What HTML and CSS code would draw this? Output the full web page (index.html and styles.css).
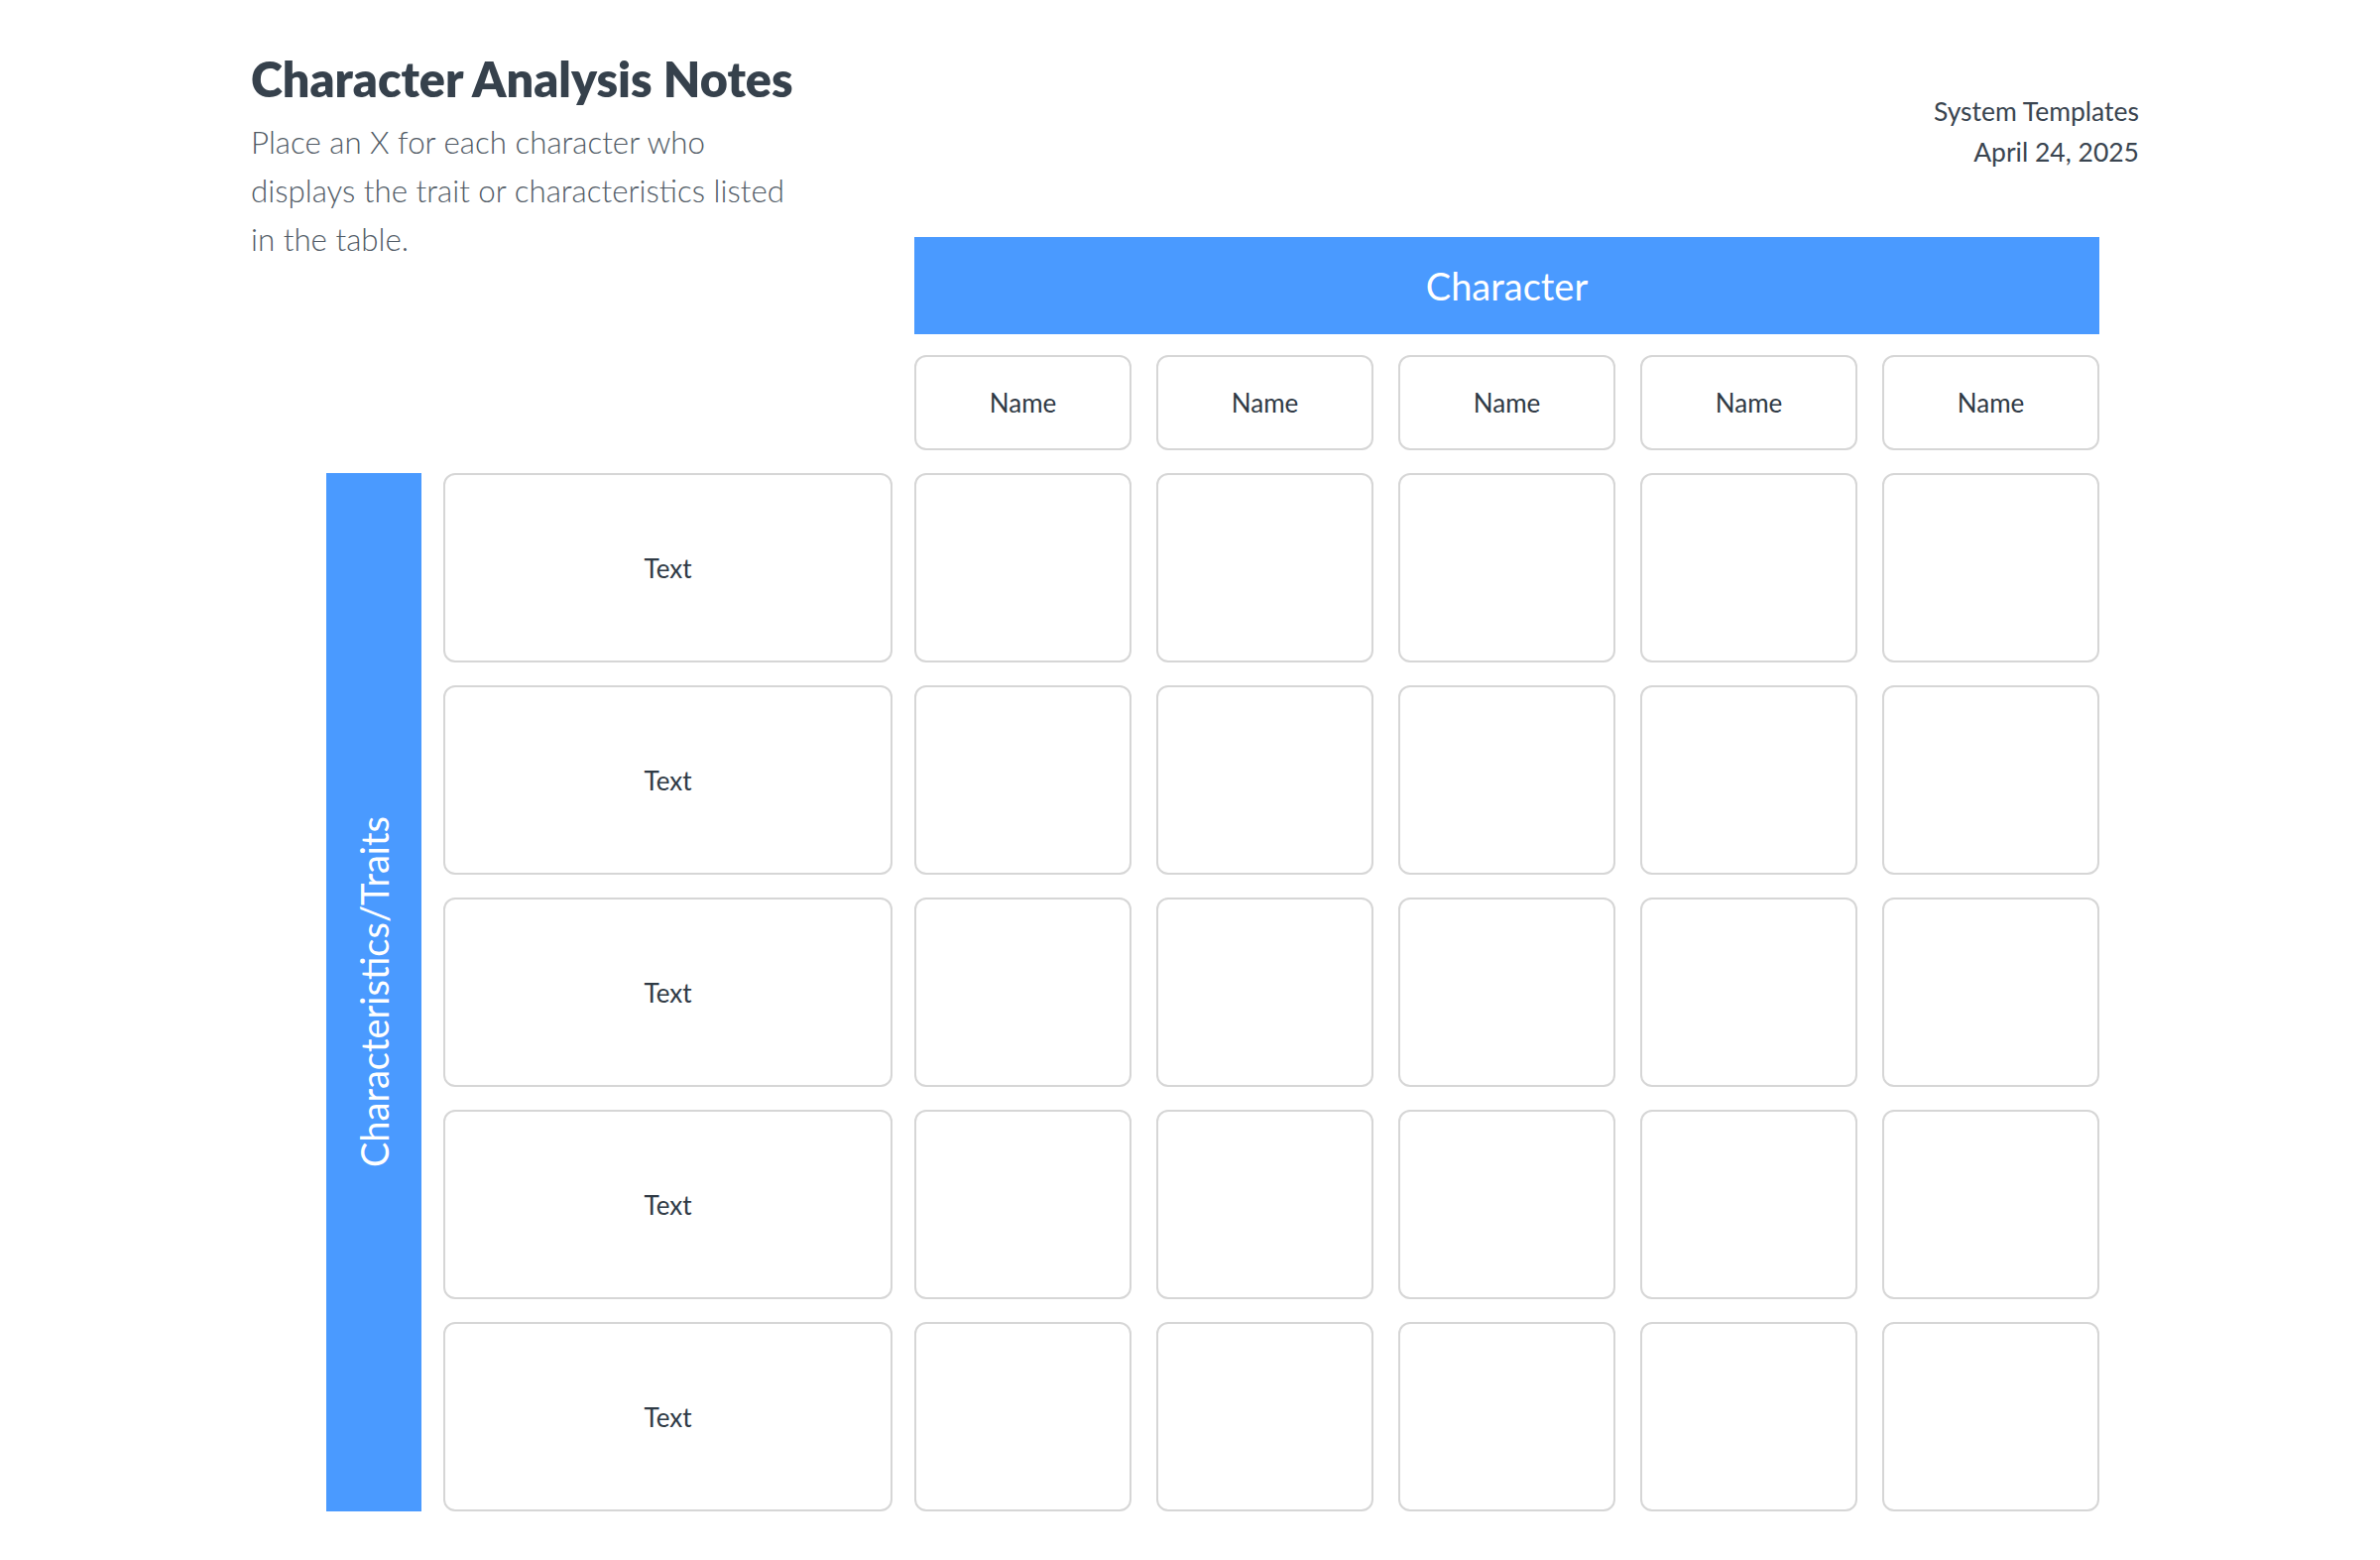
FILE: index.html
```html
<!DOCTYPE html>
<html lang="en">
<head>
<meta charset="utf-8">
<title>Character Analysis Notes</title>
<link rel="stylesheet" href="styles.css">
</head>
<body>
<main class="page">
  <div class="layout">
    <div class="intro">
      <h1 class="title">Character Analysis Notes</h1>
      <p class="desc">Place an X for each character who displays the trait or characteristics listed in the table.</p>
    </div>
    <div class="meta">
      <div>System Templates</div>
      <div>April 24, 2025</div>
    </div>
    <div class="char-bar">Character</div>
    <div class="names five">
      <div class="cell name">Name</div>
      <div class="cell name">Name</div>
      <div class="cell name">Name</div>
      <div class="cell name">Name</div>
      <div class="cell name">Name</div>
    </div>
    <div class="matrix">
      <div class="side-bar"><span class="side-label">Characteristics/Traits</span></div>
      <div class="rows">
        <div class="row">
          <div class="cell trait">Text</div>
          <div class="five"><div class="cell"></div><div class="cell"></div><div class="cell"></div><div class="cell"></div><div class="cell"></div></div>
        </div>
        <div class="row">
          <div class="cell trait">Text</div>
          <div class="five"><div class="cell"></div><div class="cell"></div><div class="cell"></div><div class="cell"></div><div class="cell"></div></div>
        </div>
        <div class="row">
          <div class="cell trait">Text</div>
          <div class="five"><div class="cell"></div><div class="cell"></div><div class="cell"></div><div class="cell"></div><div class="cell"></div></div>
        </div>
        <div class="row">
          <div class="cell trait">Text</div>
          <div class="five"><div class="cell"></div><div class="cell"></div><div class="cell"></div><div class="cell"></div><div class="cell"></div></div>
        </div>
        <div class="row">
          <div class="cell trait">Text</div>
          <div class="five"><div class="cell"></div><div class="cell"></div><div class="cell"></div><div class="cell"></div><div class="cell"></div></div>
        </div>
      </div>
    </div>
  </div>
</main>
</body>
</html>
```

FILE: styles.css
```css
* { box-sizing: border-box; }
html, body { margin: 0; padding: 0; background: #ffffff; }
body {
  font-family: Lato, "Noto Sans", "Liberation Sans", sans-serif;
  color: #2f3a45;
}
.page {
  padding: 50px 0 0 253px;
}
.layout {
  display: grid;
  grid-template-columns: 669px 1195px 40px;
  grid-template-rows: 189px 98px auto auto;
}
.intro {
  grid-column: 1;
  grid-row: 1 / span 2;
}
.title {
  margin: 0;
  font-size: 48.5px;
  line-height: 58px;
  font-weight: 800;
  color: #36414c;
}
.desc {
  margin: 11px 0 0;
  width: 558px;
  font-size: 31.3px;
  line-height: 49px;
  font-weight: 300;
  color: #515b66;
}
.meta {
  grid-column: 2 / span 2;
  grid-row: 1;
  justify-self: end;
  margin-top: 42px;
  text-align: right;
  font-size: 26.5px;
  line-height: 41px;
  color: #3a4550;
}
.char-bar {
  grid-column: 2;
  grid-row: 2;
  background: #4a9aff;
  color: #ffffff;
  font-size: 38px;
  display: flex;
  align-items: center;
  justify-content: center;
}
.five {
  display: grid;
  grid-template-columns: repeat(5, 219px);
  column-gap: 25px;
}
.names {
  grid-column: 2;
  grid-row: 3;
  margin-top: 21px;
  height: 96px;
}
.cell {
  border: 2px solid #d6d6d6;
  border-radius: 12px;
  background: #ffffff;
}
.name, .trait {
  display: flex;
  align-items: center;
  justify-content: center;
  font-size: 26px;
  color: #2f3a45;
}
.matrix {
  grid-column: 1 / span 2;
  grid-row: 4;
  margin-top: 23px;
  padding-left: 76px;
  display: flex;
  column-gap: 22px;
}
.side-bar {
  width: 96px;
  flex: none;
  background: #4a9aff;
  display: flex;
  align-items: center;
  justify-content: center;
}
.side-label {
  writing-mode: vertical-rl;
  transform: rotate(180deg);
  color: #ffffff;
  font-size: 38px;
  white-space: nowrap;
}
.rows {
  display: flex;
  flex-direction: column;
  row-gap: 23px;
}
.row {
  display: grid;
  grid-template-columns: 453px 1195px;
  column-gap: 22px;
  height: 191px;
}
```
